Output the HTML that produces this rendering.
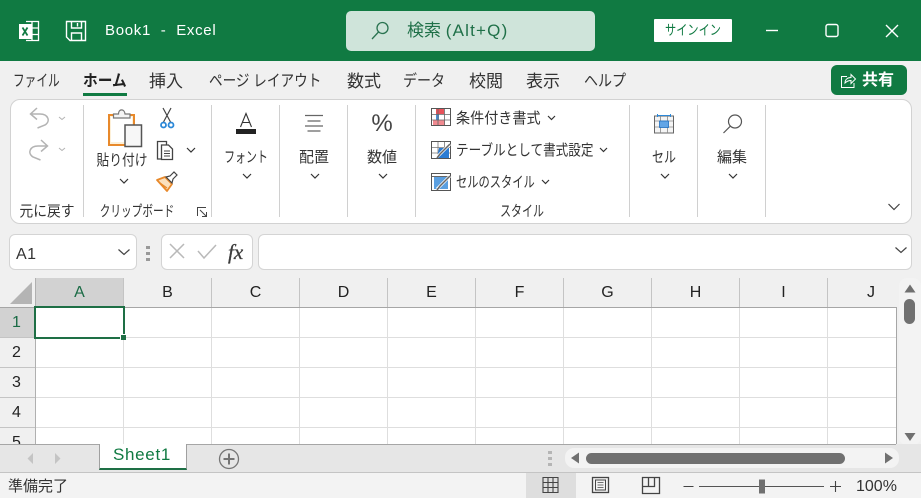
<!DOCTYPE html>
<html lang="ja"><head><meta charset="utf-8"><title>Book1 - Excel</title>
<style>
html,body{margin:0;padding:0}
body{width:921px;height:498px;overflow:hidden;position:relative;background:#f0f0f0;font-family:"Liberation Sans","Noto Sans CJK JP",sans-serif;color:#2b2b2b}
.a{position:absolute}
.t{position:absolute;white-space:nowrap;line-height:20px;height:20px}
.c{transform:translateX(-50%)}
svg{position:absolute;overflow:visible}
.r{font-size:15px;color:#333}
.l{transform-origin:left center}
.tab{font-size:16px;top:72px;color:#333;transform-origin:left center}
.kj{font-size:17px}
.sep{position:absolute;top:105px;height:112px;width:1px;background:#d0d0d0}
.h{position:absolute;top:278px;height:29px;width:87px;border-right:1px solid #c4c4c4;text-align:center;font-size:16px;line-height:29px;color:#222}
.rh{position:absolute;left:0;width:35px;height:29px;border-bottom:1px solid #c4c4c4;text-align:center;font-size:16px;line-height:30px;color:#222}
.gv{position:absolute;top:308px;height:136px;width:1px;background:#dedede}
.gh{position:absolute;left:36px;width:860px;height:1px;background:#dedede}
</style></head><body>
<div class="a" style="left:0;top:0;width:921px;height:61px;background:#107a42"></div>
<!-- excel icon -->
<svg style="left:0;top:0" width="100" height="60" fill="none" stroke="#fff" stroke-width="1.300"><path d="M26 21.500h12.500v19H26M26 28h12.500M26 34.500h12.500M32 21.500v19"/><rect x="19" y="24" width="13" height="15" fill="#fff" stroke="none"/><path d="M22.500 27.500l5 8M27.500 27.500l-5 8" stroke="#107a42" stroke-width="1.700"/>
<path d="M66.500 21.500h19v19H70l-3.500-3.500zM71.500 21.500v6.500h10v-6.500M77.500 23v3.500M71.500 40.500v-7.500h10v7.500" stroke-width="1.400"/></svg>
<div class="t" style="left:105px;top:21px;font-size:15px;color:#fff;letter-spacing:.7px">Book1&nbsp;&nbsp;-&nbsp;&nbsp;Excel</div>
<!-- search -->
<div class="a" style="left:346px;top:11px;width:249px;height:40px;border-radius:5px;background:#cfe4da"></div>
<svg style="left:370px;top:20px" width="22" height="22" fill="none" stroke="#2a7350" stroke-width="1.300"><circle cx="12.500" cy="8" r="5.500"/><path d="M8.500 12l-6.500 7"/></svg>
<div class="t" style="left:407px;top:21px;font-size:17px;color:#1f7048">検索 <span style="letter-spacing:1.200px">(Alt+Q)</span></div>
<!-- signin -->
<div class="a" style="left:654px;top:19px;width:78px;height:23px;background:#fff;border-radius:1px"></div>
<div class="t" style="left:693px;top:20px;font-size:14px;color:#107a42;transform:translateX(-50%) scaleX(.8)">サインイン</div>
<!-- window buttons -->
<svg style="left:760px;top:20px" width="140" height="22" fill="none" stroke="#fff" stroke-width="1.400"><path d="M6 10.500h12"/><rect x="66" y="4.500" width="12" height="12" rx="2"/><path d="M126 5l12 12M138 5l-12 12"/></svg>
<!-- tabs -->
<div class="t tab" style="left:13px;transform:scaleX(.73)">ファイル</div>
<div class="t tab" style="left:83px;font-weight:700;color:#222;transform:scaleX(.92)">ホーム</div>
<div class="a" style="left:83px;top:93px;width:44px;height:3px;background:#107a42"></div>
<div class="t tab kj" style="left:149px">挿入</div>
<div class="t tab" style="left:209px;transform:scaleX(.85)">ページ レイアウト</div>
<div class="t tab kj" style="left:347px">数式</div>
<div class="t tab" style="left:403px;transform:scaleX(.875)">データ</div>
<div class="t tab kj" style="left:469px">校閲</div>
<div class="t tab kj" style="left:526px">表示</div>
<div class="t tab" style="left:584px;transform:scaleX(.875)">ヘルプ</div>
<!-- share -->
<div class="a" style="left:831px;top:65px;width:76px;height:30px;border-radius:6px;background:#107a42"></div>
<svg style="left:840px;top:72px" width="18" height="18" fill="none" stroke="#fff" stroke-width="1"><path d="M7 4.500H1.500v11H14V11M5 11c0-3.500 2.500-5.500 6-5.500V2.500l4.500 4.500-4.500 4.500V8.500c-2.500 0-4.500 1-6 2.500z"/></svg>
<div class="t" style="left:862px;top:71px;font-size:16px;font-weight:700;color:#fff">共有</div>
<!-- ribbon -->
<div class="a" style="left:10px;top:99px;width:900px;height:123px;background:#fff;border:1px solid #d2d2d2;border-radius:10px"></div>
<div class="sep" style="left:83px"></div><div class="sep" style="left:211px"></div><div class="sep" style="left:279px"></div><div class="sep" style="left:347px"></div><div class="sep" style="left:415px"></div><div class="sep" style="left:629px"></div><div class="sep" style="left:697px"></div><div class="sep" style="left:765px"></div>
<!-- undo/redo -->
<svg style="left:0;top:0" width="80" height="170" fill="none" stroke="#b3b3b3" stroke-width="1.500"><path d="M37 108l-6.500 6 6.500 5.500M31 114h9c8 0 11 7 5 11l-7.500 3"/><path d="M41 140l6.500 6-6.500 5.500M47 146h-9c-8 0-11 7-5 11l7.500 3"/><path d="M59 117l3 2.500 3-2.500M59 148l3 2.500 3-2.500" stroke-width="1"/></svg>
<div class="t r" style="left:47px;top:202px;transform:translateX(-50%) scaleX(.92)">元に戻す</div>
<!-- paste -->
<svg style="left:100px;top:105px" width="50" height="45" fill="none"><rect x="9" y="10" width="25" height="30" fill="#fdf0d8" stroke="#e8892b" stroke-width="2"/><rect x="11" y="12" width="21" height="25" fill="#fff"/><path d="M13.500 13v-4h5c0-5.500 6-5.500 6.500 0h5v4z" fill="#f4f4f4" stroke="#777" stroke-width="1.200"/><rect x="25" y="20" width="16.500" height="21.500" fill="#f7f7f7" stroke="#555" stroke-width="1.500"/></svg>
<div class="t r" style="left:122px;top:151px;transform:translateX(-50%) scaleX(.85)">貼り付け</div>
<svg style="left:118px;top:177px" width="12" height="8" fill="none" stroke="#333" stroke-width="1.200"><path d="M2 2l4 4 4-4"/></svg>
<!-- scissors -->
<svg style="left:158px;top:107px" width="20" height="24" fill="none"><path d="M5 1l7.500 14M13 1L5.500 15" stroke="#444" stroke-width="1.200"/><circle cx="5.500" cy="18" r="2.500" stroke="#2b88d8" stroke-width="1.800"/><circle cx="13" cy="18" r="2.500" stroke="#2b88d8" stroke-width="1.800"/></svg>
<!-- copy -->
<svg style="left:155px;top:139px" width="24" height="24" fill="none" stroke="#444" stroke-width="1.300"><path d="M6 20H2.500V2.500h9v3"/><path d="M6.500 6h7l4 4v10.500h-11z" fill="#fff"/><path d="M9 12h6M9 14.500h6M9 17h6" stroke-width="1"/></svg>
<svg style="left:185px;top:146px" width="12" height="8" fill="none" stroke="#333" stroke-width="1.200"><path d="M2 2l4 4 4-4"/></svg>
<!-- painter -->
<svg style="left:156px;top:171px" width="24" height="22" fill="none"><path d="M1 9l8-3 7 7-5 7z" fill="#fbe0bd" stroke="#e8892b" stroke-width="1.800" stroke-linejoin="round"/><path d="M4 12l7 5" stroke="#e8892b" stroke-width="1.200"/><path d="M10 6l4-1 4-4 3 3-4 4-1 4z" fill="#fff" stroke="#444" stroke-width="1.200"/></svg>
<div class="t r" style="left:137px;top:202px;transform:translateX(-50%) scaleX(.71)">クリップボード</div>
<svg style="left:197px;top:207px" width="11" height="11" fill="none" stroke="#444" stroke-width="1"><path d="M.5 9V.500H9M3 3l6 6M9.500 5v4.500H5"/></svg>
<!-- font -->
<svg style="left:236px;top:112px" width="20" height="24"><rect x="0" y="17" width="20" height="5" fill="#222"/><path d="M4.500 15L10 1.500 15.500 15M6.500 10.500h7" fill="none" stroke="#333" stroke-width="1.100"/></svg>
<div class="t r" style="left:246px;top:148px;transform:translateX(-50%) scaleX(.73)">フォント</div>
<svg style="left:241px;top:172px" width="12" height="8" fill="none" stroke="#333" stroke-width="1.200"><path d="M2 2l4 4 4-4"/></svg>
<!-- align -->
<svg style="left:300px;top:110px" width="30" height="26" fill="none" stroke="#666" stroke-width="1.200"><path d="M5 5.500h18M7.500 11h13M5 16h18M7.500 21h13"/></svg>
<div class="t r c" style="left:314px;top:148px">配置</div>
<svg style="left:309px;top:172px" width="12" height="8" fill="none" stroke="#333" stroke-width="1.200"><path d="M2 2l4 4 4-4"/></svg>
<!-- number -->
<div class="t c" style="left:382px;top:114px;font-size:24px;color:#444">%</div>
<div class="t r c" style="left:382px;top:148px">数値</div>
<svg style="left:377px;top:172px" width="12" height="8" fill="none" stroke="#333" stroke-width="1.200"><path d="M2 2l4 4 4-4"/></svg>
<!-- styles -->
<svg style="left:431px;top:108px" width="22" height="20"><rect x=".5" y=".5" width="19" height="17" fill="#fff" stroke="#555"/><rect x="5" y="1" width="8" height="5" fill="#e8525a"/><rect x="2" y="12" width="12" height="5" fill="#f08a90"/><rect x="5" y="6" width="3" height="6" fill="#4a90d9"/><path d="M1 6.500h18M1 12h18M7 1v16M13.500 1v16" stroke="#666" stroke-width=".8"/></svg>
<div class="t r l" style="left:456px;top:109px;transform:scaleX(.94)">条件付き書式</div>
<svg style="left:546px;top:114px" width="12" height="8" fill="none" stroke="#333" stroke-width="1.200"><path d="M2 2l3.500 3.500L9 2"/></svg>
<svg style="left:431px;top:141px" width="22" height="20"><rect x=".5" y=".5" width="19" height="17" fill="#fff" stroke="#555"/><path d="M1 6.500h18M1 12h18M7 1v16M13.500 1v16" stroke="#777" stroke-width=".8"/><path d="M8 7h10v10H6z" fill="#2b7cd3"/><path d="M6 16l3-3 10-10" stroke="#fff" stroke-width="3"/><path d="M6 17l3-4L19 3" stroke="#666" stroke-width="1.500" fill="none"/></svg>
<div class="t r l" style="left:456px;top:141px;transform:scaleX(.84)">テーブルとして書式設定</div>
<svg style="left:598px;top:146px" width="12" height="8" fill="none" stroke="#333" stroke-width="1.200"><path d="M2 2l3.500 3.500L9 2"/></svg>
<svg style="left:431px;top:173px" width="22" height="20"><rect x=".5" y=".5" width="19" height="17" fill="#fff" stroke="#555"/><rect x="3" y="4" width="14" height="12" fill="#5a9fe0"/><path d="M1 3.500h18" stroke="#666"/><path d="M6 16l3-3 10-10" stroke="#fff" stroke-width="3"/><path d="M6 17l3-4L19 3" stroke="#666" stroke-width="1.500" fill="none"/></svg>
<div class="t r l" style="left:456px;top:173px;transform:scaleX(.75)">セルのスタイル</div>
<svg style="left:540px;top:178px" width="12" height="8" fill="none" stroke="#333" stroke-width="1.200"><path d="M2 2l3.500 3.500L9 2"/></svg>
<div class="t r" style="left:522px;top:202px;transform:translateX(-50%) scaleX(.73)">スタイル</div>
<!-- cells -->
<svg style="left:654px;top:113px" width="20" height="22"><rect x=".5" y="3" width="19" height="17" fill="#f4f4f4" stroke="#666"/><path d="M1 8h18M1 14h18M6.500 3v17M13.500 3v17" stroke="#888" stroke-width=".8"/><rect x="5.500" y="8" width="9" height="6.500" fill="#62a5e6" stroke="#1f6fc0" stroke-width=".8"/><path d="M3.500 2.500h13M3.500 1v3M16.500 1v3" stroke="#2b88d8" fill="none"/></svg>
<div class="t r" style="left:664px;top:148px;transform:translateX(-50%) scaleX(.8)">セル</div>
<svg style="left:659px;top:172px" width="12" height="8" fill="none" stroke="#333" stroke-width="1.200"><path d="M2 2l4 4 4-4"/></svg>
<!-- edit -->
<svg style="left:722px;top:113px" width="22" height="22" fill="none" stroke="#555" stroke-width="1.200"><circle cx="13" cy="8.500" r="6.500"/><path d="M8.500 13l-7 7"/></svg>
<div class="t r c" style="left:732px;top:148px">編集</div>
<svg style="left:727px;top:172px" width="12" height="8" fill="none" stroke="#333" stroke-width="1.200"><path d="M2 2l4 4 4-4"/></svg>
<svg style="left:887px;top:202px" width="14" height="10" fill="none" stroke="#444" stroke-width="1.200"><path d="M1.500 2l5.500 5.500L12.500 2"/></svg>
<!-- formula bar -->
<div class="a" style="left:9px;top:234px;width:126px;height:34px;background:#fff;border:1px solid #d4d4d4;border-radius:6px"></div>
<div class="t" style="left:16px;top:245px;font-size:16px;color:#333;letter-spacing:.5px">A1</div>
<svg style="left:117px;top:248px" width="14" height="9" fill="none" stroke="#444" stroke-width="1.200"><path d="M1.500 1.500l5.500 5 5.500-5"/></svg>
<svg style="left:146px;top:245px" width="5" height="18" fill="#999"><rect x="0" y="1" width="4" height="3"/><rect x="0" y="7" width="4" height="3"/><rect x="0" y="13" width="4" height="3"/></svg>
<div class="a" style="left:161px;top:234px;width:90px;height:34px;background:#fff;border:1px solid #d4d4d4;border-radius:6px"></div>
<svg style="left:169px;top:243px" width="50" height="18" fill="none" stroke="#b9b9b9" stroke-width="1.500"><path d="M1 1l14 14M15 1L1 15M29 8l6 7L47 2"/></svg>
<div class="t" style="left:228px;top:242px;font-family:'Liberation Serif','DejaVu Serif',serif;font-style:italic;font-size:21px;color:#3c3c3c;-webkit-text-stroke:.3px #3c3c3c">fx</div>
<div class="a" style="left:258px;top:234px;width:652px;height:34px;background:#fff;border:1px solid #d4d4d4;border-radius:6px"></div>
<svg style="left:894px;top:246px" width="14" height="9" fill="none" stroke="#444" stroke-width="1.200"><path d="M1.500 1.500l5.500 5 5.500-5"/></svg>
<!-- grid -->
<div class="a" style="left:36px;top:308px;width:860px;height:136px;background:#fff"></div>
<div class="gv" style="left:123px"></div><div class="gv" style="left:211px"></div><div class="gv" style="left:299px"></div><div class="gv" style="left:387px"></div><div class="gv" style="left:475px"></div><div class="gv" style="left:563px"></div><div class="gv" style="left:651px"></div><div class="gv" style="left:739px"></div><div class="gv" style="left:827px"></div>
<div class="gh" style="top:337px"></div><div class="gh" style="top:367px"></div><div class="gh" style="top:397px"></div><div class="gh" style="top:427px"></div>
<svg style="left:10px;top:282px" width="24" height="24"><path d="M22 0v22H0z" fill="#b4b4b4"/></svg>
<div class="h" style="left:36px;background:#d2d2d2;color:#1a6b45;width:87px">A</div>
<div class="h" style="left:124px">B</div><div class="h" style="left:212px">C</div><div class="h" style="left:300px">D</div><div class="h" style="left:388px">E</div><div class="h" style="left:476px">F</div><div class="h" style="left:564px">G</div><div class="h" style="left:652px">H</div><div class="h" style="left:740px">I</div><div class="h" style="left:828px;border-right:0;width:86px">J</div>
<div class="a" style="left:0;top:307px;width:896px;height:1px;background:#a6a6a6"></div>
<div class="a" style="left:896px;top:307px;width:1px;height:137px;background:#a6a6a6"></div>
<div class="a" style="left:35px;top:278px;width:1px;height:166px;background:#b0b0b0"></div>
<div class="rh" style="top:308px;background:#d2d2d2;color:#1a6b45;width:33px;padding-right:2px">1</div>
<div class="rh" style="top:338px;width:33px;padding-right:2px">2</div><div class="rh" style="top:368px;width:33px;padding-right:2px">3</div><div class="rh" style="top:398px;width:33px;padding-right:2px">4</div>
<div class="a" style="left:0;top:428px;width:33px;height:16px;overflow:hidden"><div style="text-align:center;font-size:16px;line-height:30px;color:#222">5</div></div>
<!-- selection -->
<div class="a" style="left:34px;top:306px;width:87px;height:29px;border:2px solid #1e6f45"></div>
<div class="a" style="left:120px;top:334px;width:6px;height:6px;background:#1e6f45;border-left:1px solid #fff;border-top:1px solid #fff;box-sizing:border-box"></div>
<!-- v scroll -->
<div class="a" style="left:899px;top:278px;width:22px;height:167px;background:#f3f3f3;border-radius:8px"></div>
<svg style="left:904px;top:284px" width="12" height="10" fill="#707070"><path d="M6 .5l5.500 8H.5z"/></svg>
<div class="a" style="left:904px;top:299px;width:11px;height:25px;border-radius:5.500px;background:#707070"></div>
<svg style="left:904px;top:432px" width="12" height="10" fill="#707070"><path d="M.5 1h11L6 9z"/></svg>
<!-- tabs bar -->
<div class="a" style="left:0;top:444px;width:921px;height:28px;background:#e6e6e6"></div>
<div class="a" style="left:0;top:444px;width:896px;height:1px;background:#a6a6a6"></div>
<svg style="left:26px;top:452px" width="36" height="13" fill="#c4c4c4"><path d="M7 1v11L1.500 6.500zM29 1v11l5.500-5.500z"/></svg>
<div class="a" style="left:99px;top:444px;width:86px;height:24px;background:#fff;border:1px solid #a0a0a0;border-top:0;border-bottom:2px solid #1e6f45"></div>
<div class="t c" style="left:142px;top:445px;font-size:17px;color:#107a42;letter-spacing:.7px">Sheet1</div>
<svg style="left:218px;top:448px" width="22" height="22" fill="none" stroke="#757575"><circle cx="11" cy="11" r="9.500" stroke-width="1.300"/><path d="M11 5.500v11M5.500 11h11" stroke-width="2"/></svg>
<svg style="left:548px;top:451px" width="5" height="17" fill="#b5b5b5"><rect x="0" y="0" width="4" height="3"/><rect x="0" y="6" width="4" height="3"/><rect x="0" y="12" width="4" height="3"/></svg>
<div class="a" style="left:565px;top:448px;width:334px;height:20px;border-radius:9px;background:#f3f3f3"></div>
<svg style="left:570px;top:452px" width="325" height="12" fill="#707070"><path d="M9 .5v11L1 6zM315 .5v11l8-5.500z"/></svg>
<div class="a" style="left:586px;top:453px;width:259px;height:11px;border-radius:5.500px;background:#707070"></div>
<!-- status -->
<div class="a" style="left:0;top:472px;width:921px;height:26px;background:#f3f3f3;border-top:1px solid #c4c4c4;box-sizing:border-box"></div>
<div class="t" style="left:8px;top:477px;font-size:15px;color:#333">準備完了</div>
<div class="a" style="left:526px;top:473px;width:50px;height:25px;background:#dedede"></div>
<svg style="left:542px;top:477px" width="18" height="18" fill="none" stroke="#444" stroke-width="1.100"><path d="M1 .5h15v15H1zM1 5.500h15M1 10.500h15M6 .5v15M11 .5v15"/></svg>
<svg style="left:592px;top:477px" width="18" height="18" fill="none" stroke="#444"><rect x=".5" y=".5" width="16" height="15" stroke-width="1.300"/><rect x="3.500" y="3" width="10" height="10" stroke-width="1"/><path d="M5.500 5.500h6M5.500 8h6M5.500 10.500h6" stroke-width=".8"/></svg>
<svg style="left:642px;top:477px" width="18" height="18" fill="none" stroke="#444" stroke-width="1.300"><path d="M.5.500h17v16H.5zM.5 9.500h12V.5M6.500.5v9"/></svg>
<svg style="left:682px;top:480px" width="160" height="14"><path d="M1.500 6.500h10M148 6.500h11M153.500 1v11" stroke="#444" stroke-width="1.100" fill="none"/><path d="M17 6.500h125" stroke="#555" stroke-width="1" fill="none"/><rect x="77" y="-.5" width="6" height="14" fill="#707070"/></svg>
<div class="t" style="left:856px;top:477px;font-size:16px;color:#333">100%</div>
</body></html>
